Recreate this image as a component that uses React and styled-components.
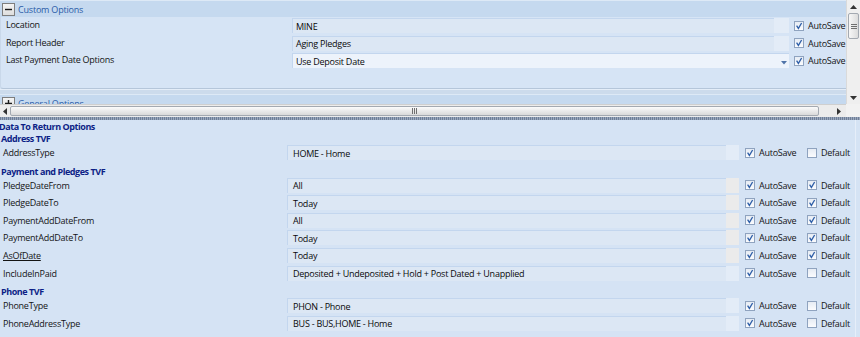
import React from "react";
import styled, { createGlobalStyle } from "styled-components";

const GlobalStyle = createGlobalStyle`
  html, body { margin: 0; padding: 0; }
  body {
    width: 860px;
    height: 337px;
    overflow: hidden;
    background: #d5e3f4;
    font-family: "Open Sans", "Noto Sans", sans-serif;
    font-size: 9px;
    letter-spacing: -0.25px;
    color: #111;
  }
`;

const topOptions = [
  { label: "Location", value: "MINE" },
  { label: "Report Header", value: "Aging Pledges" },
  { label: "Last Payment Date Options", value: "Use Deposit Date", dropdown: true },
];

const sections = [
  {
    title: "Address TVF",
    rows: [{ label: "AddressType", value: "HOME - Home", def: false }],
  },
  {
    title: "Payment and Pledges TVF",
    rows: [
      { label: "PledgeDateFrom", value: "All", def: true },
      { label: "PledgeDateTo", value: "Today", def: true },
      { label: "PaymentAddDateFrom", value: "All", def: true },
      { label: "PaymentAddDateTo", value: "Today", def: true },
      { label: "AsOfDate", value: "Today", def: true, underline: true },
      { label: "IncludeInPaid", value: "Deposited + Undeposited + Hold + Post Dated + Unapplied", def: false },
    ],
  },
  {
    title: "Phone TVF",
    rows: [
      { label: "PhoneType", value: "PHON - Phone", def: false },
      { label: "PhoneAddressType", value: "BUS - BUS,HOME - Home", def: false },
    ],
  },
];

export default function App() {
  return (
    <>
      <GlobalStyle />
      <Window>
        <TopPane>
          <Viewport>
            <GroupHeader>
              <ToggleBtn>
                <svg width="7" height="7" viewBox="0 0 7 7">
                  <path d="M0 3.5 H7" stroke="#1a1a1a" strokeWidth="1.4" />
                </svg>
              </ToggleBtn>
              <GroupTitle>Custom Options</GroupTitle>
            </GroupHeader>
            <GroupBody>
              {topOptions.map((o) => (
                <Row key={o.label} $pad={5}>
                  <Label $w={286} $lh={14}>{o.label}</Label>
                  {o.dropdown ? (
                    <ValueBox $w={497} $pad={3} $light>
                      <span>{o.value}</span>
                      <DropArrow>
                        <svg width="6" height="4" viewBox="0 0 6 4">
                          <path d="M0 0 H6 L3 3.5 Z" fill="#4f73a8" />
                        </svg>
                      </DropArrow>
                    </ValueBox>
                  ) : (
                    <>
                      <ValueBox $w={482} $pad={3}>{o.value}</ValueBox>
                      <SideBox $w={15} />
                    </>
                  )}
                  <CheckItem $ml={5}>
                    <Check checked />
                    <span>AutoSave</span>
                  </CheckItem>
                </Row>
              ))}
            </GroupBody>
            <Band />
            <GroupHeader>
              <ToggleBtn>
                <svg width="7" height="7" viewBox="0 0 7 7">
                  <path d="M0 3.5 H7 M3.5 0 V7" stroke="#1a1a1a" strokeWidth="1.4" />
                </svg>
              </ToggleBtn>
              <GroupTitle>General Options</GroupTitle>
            </GroupHeader>
          </Viewport>

          <VScroll>
            <ArrowCell $h={13}>
              <svg width="7" height="4" viewBox="0 0 7 4">
                <path d="M0 4 H7 L3.5 0 Z" fill="#333" />
              </svg>
            </ArrowCell>
            <VThumb>
              <Grip $vertical />
            </VThumb>
            <Spacer />
            <ArrowCell $h={13}>
              <svg width="7" height="4" viewBox="0 0 7 4">
                <path d="M0 0 H7 L3.5 4 Z" fill="#333" />
              </svg>
            </ArrowCell>
          </VScroll>

          <HScroll>
            <ArrowCell $w={10}>
              <svg width="4" height="7" viewBox="0 0 4 7">
                <path d="M4 0 V7 L0 3.5 Z" fill="#333" />
              </svg>
            </ArrowCell>
            <HThumb>
              <Grip />
            </HThumb>
            <Spacer />
            <ArrowCell $w={14}>
              <svg width="4" height="7" viewBox="0 0 4 7">
                <path d="M0 0 V7 L4 3.5 Z" fill="#333" />
              </svg>
            </ArrowCell>
          </HScroll>
          <Corner />
        </TopPane>

        <Splitter />

        <BottomPane>
          <Title>Data To Return Options</Title>
          {sections.map((s, i) => (
            <Section key={s.title}>
              <SectionTitle $first={i === 0}>{s.title}</SectionTitle>
              {s.rows.map((r) => (
                <Row key={r.label} $pad={3}>
                  <Label $w={284} $lh={16} $underline={r.underline}>{r.label}</Label>
                  <ValueBox $w={439} $pad={5}>{r.value}</ValueBox>
                  <SideBox $w={13} $gray={r.def} />
                  <CheckItem $ml={6} $w={62}>
                    <Check checked />
                    <span>AutoSave</span>
                  </CheckItem>
                  <CheckItem>
                    <Check checked={r.def} />
                    <span>Default</span>
                  </CheckItem>
                </Row>
              ))}
            </Section>
          ))}
        </BottomPane>
      </Window>
    </>
  );
}

function Check({ checked }) {
  return (
    <CheckBox>
      {checked && (
        <svg width="8" height="8" viewBox="0 0 8 8">
          <path d="M1.6 3.6 L3.4 6.4 L6.6 1" stroke="#2f5fa8" strokeWidth="1.3" fill="none" />
        </svg>
      )}
    </CheckBox>
  );
}

const Window = styled.div`
  display: flex;
  flex-direction: column;
  width: 860px;
  height: 337px;
  overflow: hidden;
`;

const TopPane = styled.div`
  display: grid;
  grid-template-columns: 846px 14px;
  grid-template-rows: 104px 13px;
  flex: none;
`;

const Viewport = styled.div`
  overflow: hidden;
  background: #d6e4f5;
`;

const GroupHeader = styled.div`
  display: flex;
  align-items: center;
  height: 17px;
  box-sizing: border-box;
  padding-left: 2px;
  background: #c5d9ef;
  border-top: 1px solid #dde9f6;
`;

const ToggleBtn = styled.span`
  width: 13px;
  height: 13px;
  box-sizing: border-box;
  border: 1px solid #7e7e7e;
  background: linear-gradient(#f4f4f4, #dedede);
  display: inline-flex;
  align-items: center;
  justify-content: center;
`;

const GroupTitle = styled.span`
  margin-left: 3px;
  color: #2a5ca8;
  font-size: 9px;
  letter-spacing: -0.2px;
`;

const GroupBody = styled.div`
  height: 70px;
  padding-top: 1px;
  background: #d6e4f5;
  border-bottom: 1px solid #b5c6da;
  border-left: 1px solid #c9d8ea;
  border-bottom-left-radius: 3px;
`;

const Band = styled.div`
  height: 4px;
  background: #ccdbec;
  border-top: 1px solid #e4edf8;
`;

const Row = styled.div`
  display: flex;
  align-items: flex-start;
  height: 17.6px;
  padding-left: ${(p) => p.$pad}px;
`;

const Label = styled.div`
  width: ${(p) => p.$w}px;
  flex: none;
  height: 15px;
  line-height: ${(p) => p.$lh}px;
  white-space: nowrap;
  color: #141414;
  text-decoration: ${(p) => (p.$underline ? "underline" : "none")};
`;

const ValueBox = styled.div`
  display: flex;
  align-items: center;
  justify-content: space-between;
  flex: none;
  box-sizing: border-box;
  width: ${(p) => p.$w}px;
  height: 15px;
  padding-left: ${(p) => p.$pad}px;
  background: ${(p) => (p.$light ? "#edf3fb" : "#dce7f4")};
  border-top: 1px solid #c3d6ee;
  border-left: 1px solid #c3d6ee;
  color: #0a0a0a;
  white-space: nowrap;
`;

const DropArrow = styled.span`
  display: inline-flex;
  margin-right: 2px;
  margin-top: 3px;
`;

const SideBox = styled.div`
  width: ${(p) => p.$w}px;
  height: 15px;
  flex: none;
  background: ${(p) => (p.$gray ? "#ebebeb" : "#e3ecf7")};
`;

const CheckItem = styled.div`
  display: flex;
  align-items: center;
  gap: 4px;
  height: 15px;
  flex: none;
  width: ${(p) => (p.$w ? `${p.$w}px` : "auto")};
  margin-left: ${(p) => p.$ml || 0}px;
  white-space: nowrap;
  color: #141414;
`;

const CheckBox = styled.span`
  width: 10px;
  height: 10px;
  box-sizing: border-box;
  border: 1px solid #8fa3bf;
  background: linear-gradient(#e6ecf4, #fbfcfe);
  display: inline-flex;
  align-items: center;
  justify-content: center;
`;

const VScroll = styled.div`
  display: flex;
  flex-direction: column;
  background: #efefef;
  border-left: 1px solid #dadada;
`;

const HScroll = styled.div`
  display: flex;
  align-items: stretch;
  background: #ececec;
  border-top: 1px solid #cfcfcf;
`;

const Corner = styled.div`
  background: #f2f2f2;
`;

const ArrowCell = styled.div`
  display: flex;
  align-items: center;
  justify-content: center;
  flex: none;
  width: ${(p) => (p.$w ? `${p.$w}px` : "auto")};
  height: ${(p) => (p.$h ? `${p.$h}px` : "auto")};
`;

const Spacer = styled.div`
  flex: 1;
`;

const VThumb = styled.div`
  height: 26px;
  margin: 0 1px;
  box-sizing: border-box;
  border: 1px solid #a3a9b1;
  border-radius: 2px;
  background: linear-gradient(90deg, #f7f7f7, #dcdcdc);
  display: flex;
  align-items: center;
  justify-content: center;
`;

const HThumb = styled.div`
  width: 809px;
  margin: 1px 0;
  box-sizing: border-box;
  border: 1px solid #a3a9b1;
  border-radius: 2px;
  background: linear-gradient(#fbfbfb, #dadada);
  display: flex;
  align-items: center;
  justify-content: center;
`;

const Grip = styled.span`
  width: ${(p) => (p.$vertical ? "6px" : "5px")};
  height: ${(p) => (p.$vertical ? "5px" : "6px")};
  background: ${(p) =>
    p.$vertical
      ? "repeating-linear-gradient(#6f6f6f 0 1px, transparent 1px 2px)"
      : "repeating-linear-gradient(90deg, #6f6f6f 0 1px, transparent 1px 2px)"};
`;

const Splitter = styled.div`
  height: 3px;
  flex: none;
  background: repeating-linear-gradient(90deg, #6f7f98 0 1px, #9aa8bd 1px 2px);
`;

const BottomPane = styled.div`
  flex: 1;
  padding-top: 1px;
  background: #d5e3f4;
  border-right: 1px solid #e6eef9;
  margin-right: 4px;
`;

const Title = styled.div`
  height: 12px;
  line-height: 12px;
  margin-left: -1px;
  font-weight: 700;
  letter-spacing: -0.45px;
  color: #0d1f86;
`;

const Section = styled.div``;

const SectionTitle = styled.div`
  height: 12px;
  line-height: 12px;
  margin-top: ${(p) => (p.$first ? 0 : 3)}px;
  padding-left: 1px;
  font-weight: 700;
  letter-spacing: -0.45px;
  color: #0d1f86;
`;
